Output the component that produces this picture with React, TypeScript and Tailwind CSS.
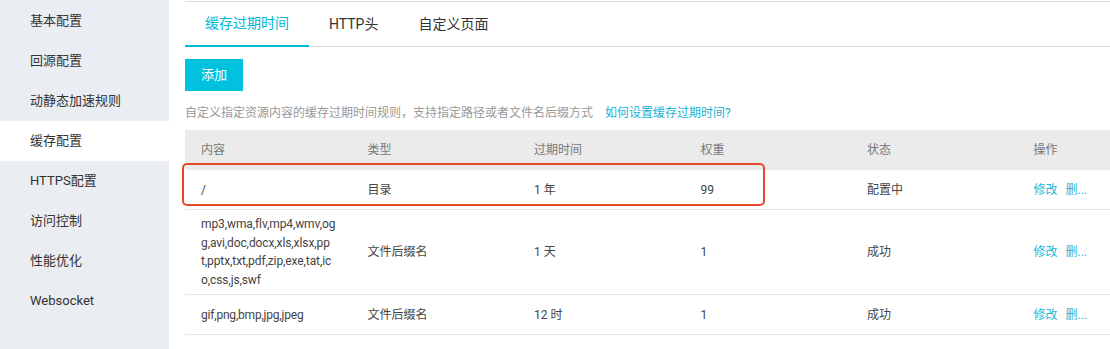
import React from "react";

const FONT = { fontFamily: 'Roboto, "Noto Sans CJK SC", sans-serif' };

const sideItems = ["基本配置", "回源配置", "动静态加速规则", "缓存配置", "HTTPS配置", "访问控制", "性能优化", "Websocket"];

const headers = ["内容", "类型", "过期时间", "权重", "状态", "操作"];

function Ops() {
  return (
    <div className="flex items-center gap-[8px] text-[#1fb7d6]">
      <span>修改</span>
      <span>删...</span>
    </div>
  );
}

export default function App() {
  return (
    <div style={FONT} className="flex w-[1110px] h-[349px] overflow-hidden bg-white text-[#333]">
      <aside className="w-[169px] shrink-0 bg-[#eaedf1] pt-[1px]">
        {sideItems.map((s) => (
          <div
            key={s}
            className={`h-[40px] flex items-center pl-[30px] text-[13px] text-[#333] ${s === "缓存配置" ? "bg-white" : ""}`}
          >
            {s}
          </div>
        ))}
      </aside>
      <main className="flex-1 min-w-0 pl-[16px] overflow-hidden">
        <div className="mt-[1px] border-t border-[#dcdcdc]" />
        <div className="flex h-[45px] border-b border-[#dcdcdc] text-[14px]">
          <div className="px-[20px] flex items-center text-[#00b8d8] border-b-2 border-[#00b8d8] -mb-px">缓存过期时间</div>
          <div className="px-[20px] flex items-center text-[#333]">HTTP头</div>
          <div className="px-[20px] flex items-center text-[#333]">自定义页面</div>
        </div>
        <button className="mt-[12px] w-[58px] h-[32px] bg-[#00c1de] text-white text-[13px] flex items-center justify-center">
          添加
        </button>
        <div className="mt-[13px] h-[18px] leading-[18px] text-[12px] text-[#999] whitespace-nowrap">
          自定义指定资源内容的缓存过期时间规则，支持指定路径或者文件名后缀方式
          <span className="ml-[12px] text-[#19b1d6]">如何设置缓存过期时间?</span>
        </div>
        <div className="mt-[8px] w-[999px] text-[12px]">
          <div className="grid grid-cols-6 h-[40px] bg-[#ebebeb] text-[#777]">
            {headers.map((h) => (
              <div key={h} className="pl-[16px] flex items-center">{h}</div>
            ))}
          </div>
          <div className="relative grid grid-cols-6 h-[40px] border-b border-[#e6e6e6] text-[#444]">
            <div className="pl-[16px] flex items-center">/</div>
            <div className="pl-[16px] flex items-center">目录</div>
            <div className="pl-[16px] flex items-center">1 年</div>
            <div className="pl-[16px] flex items-center">99</div>
            <div className="pl-[16px] flex items-center">配置中</div>
            <div className="pl-[16px] flex items-center"><Ops /></div>
            <div className="absolute left-[-3px] top-[-7px] w-[583px] h-[43px] border-2 border-[#e5472d] rounded-[5px]" />
          </div>
          <div className="grid grid-cols-6 h-[85px] border-b border-[#e6e6e6] text-[#444]">
            <div className="pl-[16px] flex items-center">
              <div className="leading-[18.5px] tracking-[-0.1px] whitespace-nowrap">
                <div>mp3,wma,flv,mp4,wmv,og</div>
                <div>g,avi,doc,docx,xls,xlsx,pp</div>
                <div>t,pptx,txt,pdf,zip,exe,tat,ic</div>
                <div>o,css,js,swf</div>
              </div>
            </div>
            <div className="pl-[16px] flex items-center">文件后缀名</div>
            <div className="pl-[16px] flex items-center">1 天</div>
            <div className="pl-[16px] flex items-center">1</div>
            <div className="pl-[16px] flex items-center">成功</div>
            <div className="pl-[16px] flex items-center"><Ops /></div>
          </div>
          <div className="grid grid-cols-6 h-[40px] border-b border-[#e6e6e6] text-[#444]">
            <div className="pl-[16px] flex items-center tracking-[-0.2px]">gif,png,bmp,jpg,jpeg</div>
            <div className="pl-[16px] flex items-center">文件后缀名</div>
            <div className="pl-[16px] flex items-center">12 时</div>
            <div className="pl-[16px] flex items-center">1</div>
            <div className="pl-[16px] flex items-center">成功</div>
            <div className="pl-[16px] flex items-center"><Ops /></div>
          </div>
        </div>
      </main>
    </div>
  );
}
